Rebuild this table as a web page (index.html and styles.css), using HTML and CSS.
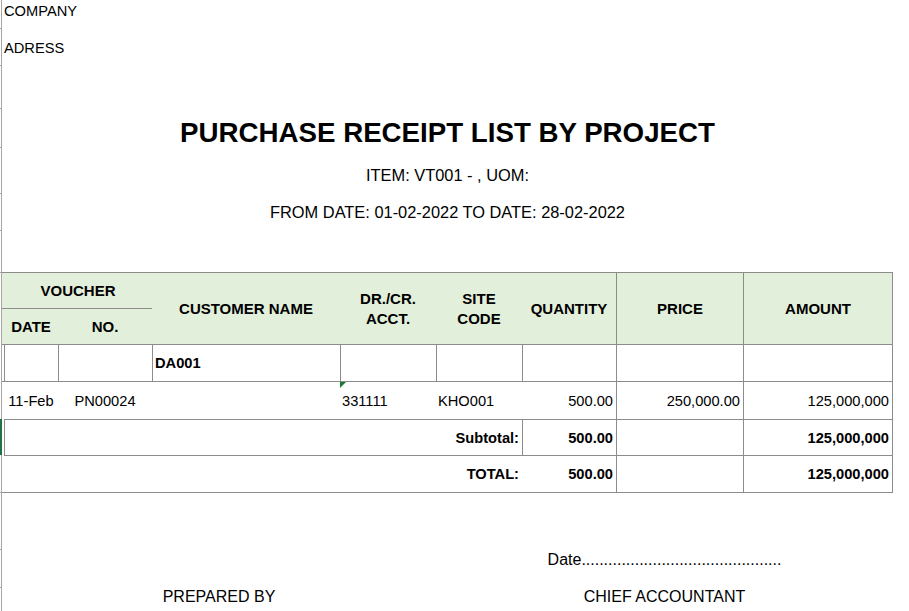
FILE: index.html
```html
<!DOCTYPE html>
<html lang="en">
<head>
<meta charset="utf-8">
<title>Purchase Receipt List by Project</title>
<link rel="stylesheet" href="styles.css">
</head>
<body>
<div class="sheet">
  <div class="company">COMPANY</div>
  <div class="address">ADRESS</div>
  <h1 class="title">PURCHASE RECEIPT LIST BY PROJECT</h1>
  <div class="subtitle item">ITEM: VT001 - , UOM:</div>
  <div class="subtitle range">FROM DATE: 01-02-2022 TO DATE: 28-02-2022</div>

  <div class="report">
    <div class="cell hd t"></div>
    <div class="cell hd t c span2">VOUCHER</div>
    <div class="cell hd t c tall">CUSTOMER NAME</div>
    <div class="cell hd t c tall"><span class="stack">DR./CR.<br>ACCT.</span></div>
    <div class="cell hd t c tall"><span class="stack">SITE<br>CODE</span></div>
    <div class="cell hd t c tall">QUANTITY</div>
    <div class="cell hd t l c tall">PRICE</div>
    <div class="cell hd t l r c tall">AMOUNT</div>
    <div class="cell hd t"></div>
    <div class="cell hd t c">DATE</div>
    <div class="cell hd t c">NO.</div>

    <div class="cell t"></div>
    <div class="cell t l"></div>
    <div class="cell t l"></div>
    <div class="cell t l lf bold">DA001</div>
    <div class="cell t l"></div>
    <div class="cell t l"></div>
    <div class="cell t l"></div>
    <div class="cell t l"></div>
    <div class="cell t l r"></div>

    <div class="cell t"></div>
    <div class="cell t c">11-Feb</div>
    <div class="cell t c">PN00024</div>
    <div class="cell t"></div>
    <div class="cell t lf">331111<span class="flag"></span></div>
    <div class="cell t lf">KHO001</div>
    <div class="cell t rt">500.00</div>
    <div class="cell t l rt">250,000.00</div>
    <div class="cell t l r rt">125,000,000</div>

    <div class="cell"><span class="select-bar"></span></div>
    <div class="cell t l rt bold span5">Subtotal:</div>
    <div class="cell t l rt bold">500.00</div>
    <div class="cell t l"></div>
    <div class="cell t l r rt bold">125,000,000</div>

    <div class="cell b"></div>
    <div class="cell t b rt bold span5">TOTAL:</div>
    <div class="cell t b rt bold">500.00</div>
    <div class="cell t l b"></div>
    <div class="cell t l r b rt bold">125,000,000</div>
  </div>

  <div class="signatures">
    <div class="sig-date">Date.............................................</div>
    <div class="sig-name">PREPARED BY</div>
    <div class="sig-name">CHIEF ACCOUNTANT</div>
  </div>
</div>
</body>
</html>
```

FILE: styles.css
```css
html, body {
  margin: 0;
  padding: 0;
  background: #ffffff;
}

body {
  font-family: "Liberation Sans", Arial, sans-serif;
  font-size: 14.67px;
  color: #000000;
  padding-left: 1px;
  min-height: 611px;
  box-sizing: border-box;
  background:
    linear-gradient(#a6a6a6, #a6a6a6) no-repeat 0 28px / 1px 1px,
    linear-gradient(#a6a6a6, #a6a6a6) no-repeat 0 65px / 1px 1px,
    linear-gradient(#a6a6a6, #a6a6a6) no-repeat 0 108px / 1px 1px,
    linear-gradient(#a6a6a6, #a6a6a6) no-repeat 0 147px / 1px 1px,
    linear-gradient(#a6a6a6, #a6a6a6) no-repeat 0 193px / 1px 1px,
    linear-gradient(#a6a6a6, #a6a6a6) no-repeat 0 230px / 1px 1px,
    linear-gradient(#a6a6a6, #a6a6a6) no-repeat 0 272px / 1px 1px,
    linear-gradient(#a6a6a6, #a6a6a6) no-repeat 0 492px / 1px 1px,
    linear-gradient(#a6a6a6, #a6a6a6) no-repeat 0 549px / 1px 1px,
    linear-gradient(#a6a6a6, #a6a6a6) no-repeat 0 587px / 1px 1px,
    #ffffff;
}

.sheet {
  border-left: 1px solid #a6a6a6;
  min-height: 611px;
  box-sizing: border-box;
  padding-top: 1px;
  width: 892px;
}

.company,
.address {
  height: 20px;
  line-height: 20px;
  padding-left: 2px;
}

.address {
  margin-top: 17px;
}

.title {
  margin: 58px 0 0 0;
  width: 891px;
  height: 34px;
  line-height: 34px;
  font-size: 27.7px;
  font-weight: bold;
  text-align: center;
}

.subtitle {
  width: 891px;
  height: 20px;
  line-height: 20px;
  text-align: center;
  font-size: 16.4px;
}

.item {
  margin-top: 15px;
}

.range {
  margin-top: 17px;
}

.report {
  margin-top: 50px;
  display: grid;
  grid-template-columns: 2px 54px 94px 188px 96px 86px 94px 127px 150px;
  grid-template-rows: 36px 36px 37px 38px 36px 38px;
  width: 891px;
}

.cell {
  box-sizing: border-box;
  display: flex;
  align-items: center;
  padding: 0 3px 0 2px;
  white-space: nowrap;
  line-height: 18px;
  position: relative;
}

.hd {
  background: #e2efda;
  font-weight: bold;
  font-size: 15px;
}

.t { border-top: 1px solid #8c8c8c; }
.l { border-left: 1px solid #8c8c8c; }
.r { border-right: 1px solid #8c8c8c; }
.b { border-bottom: 1px solid #8c8c8c; }

.c { justify-content: center; text-align: center; padding: 0; }
.lf { justify-content: flex-start; }
.rt { justify-content: flex-end; }
.bold { font-weight: bold; }

.span2 { grid-column: span 2; }
.span5 { grid-column: span 5; }
.tall { grid-row: span 2; }

.stack {
  display: block;
  line-height: 20px;
  text-align: center;
}

.flag {
  position: absolute;
  left: 0;
  top: 0;
  width: 0;
  height: 0;
  border-top: 6px solid #1b7a33;
  border-right: 6px solid transparent;
}

.select-bar {
  position: absolute;
  left: -2px;
  top: 0;
  width: 2px;
  height: 36px;
  background: #217346;
}

.signatures {
  margin-top: 57px;
  display: grid;
  grid-template-columns: 434px 457px;
  grid-template-rows: 20px 20px;
  row-gap: 17px;
  font-size: 16px;
  line-height: 20px;
  text-align: center;
}

.sig-date {
  grid-column: 2;
  grid-row: 1;
}

.sig-name {
  grid-row: 2;
}
```
